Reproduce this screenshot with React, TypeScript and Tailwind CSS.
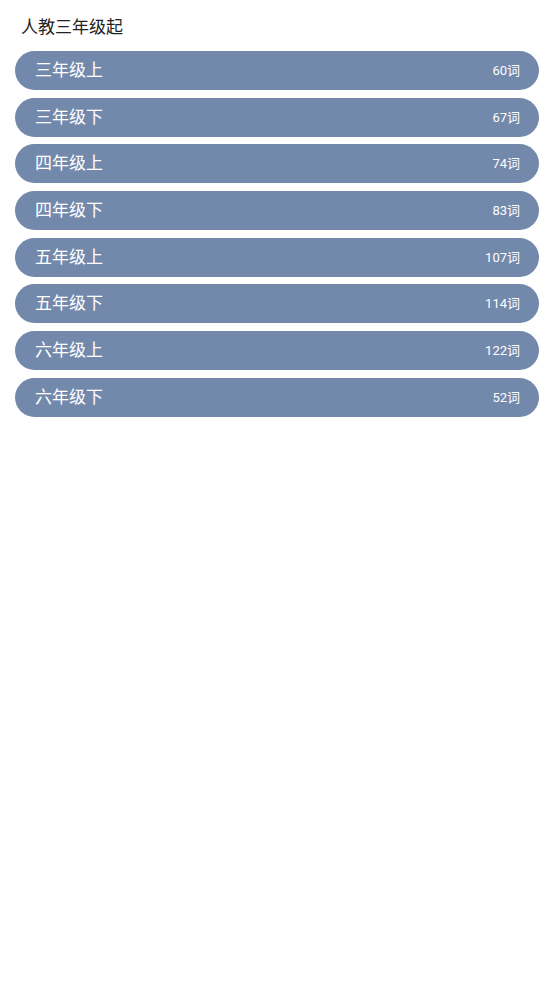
import React from "react";

const items: [string, string][] = [
  ["三年级上", "60词"],
  ["三年级下", "67词"],
  ["四年级上", "74词"],
  ["四年级下", "83词"],
  ["五年级上", "107词"],
  ["五年级下", "114词"],
  ["六年级上", "122词"],
  ["六年级下", "52词"],
];

export default function App() {
  return (
    <div
      className="w-[554px] h-[984px] bg-white"
      style={{ fontFamily: 'Roboto, "Noto Sans CJK SC", sans-serif' }}
    >
      <div className="pl-[21px] pt-[14px] h-[51px] text-[17px] leading-[26px] text-[#222]">
        人教三年级起
      </div>
      <div className="flex flex-col gap-[7.7px] px-[15px]">
        {items.map(([name, count]) => (
          <div
            key={name}
            className="h-[39px] rounded-full bg-[#7389ac] flex items-center justify-between pl-[20px] pr-[19px] text-white"
          >
            <span className="text-[17px] leading-none">{name}</span>
            <span className="text-[13px] leading-none">{count}</span>
          </div>
        ))}
      </div>
    </div>
  );
}
